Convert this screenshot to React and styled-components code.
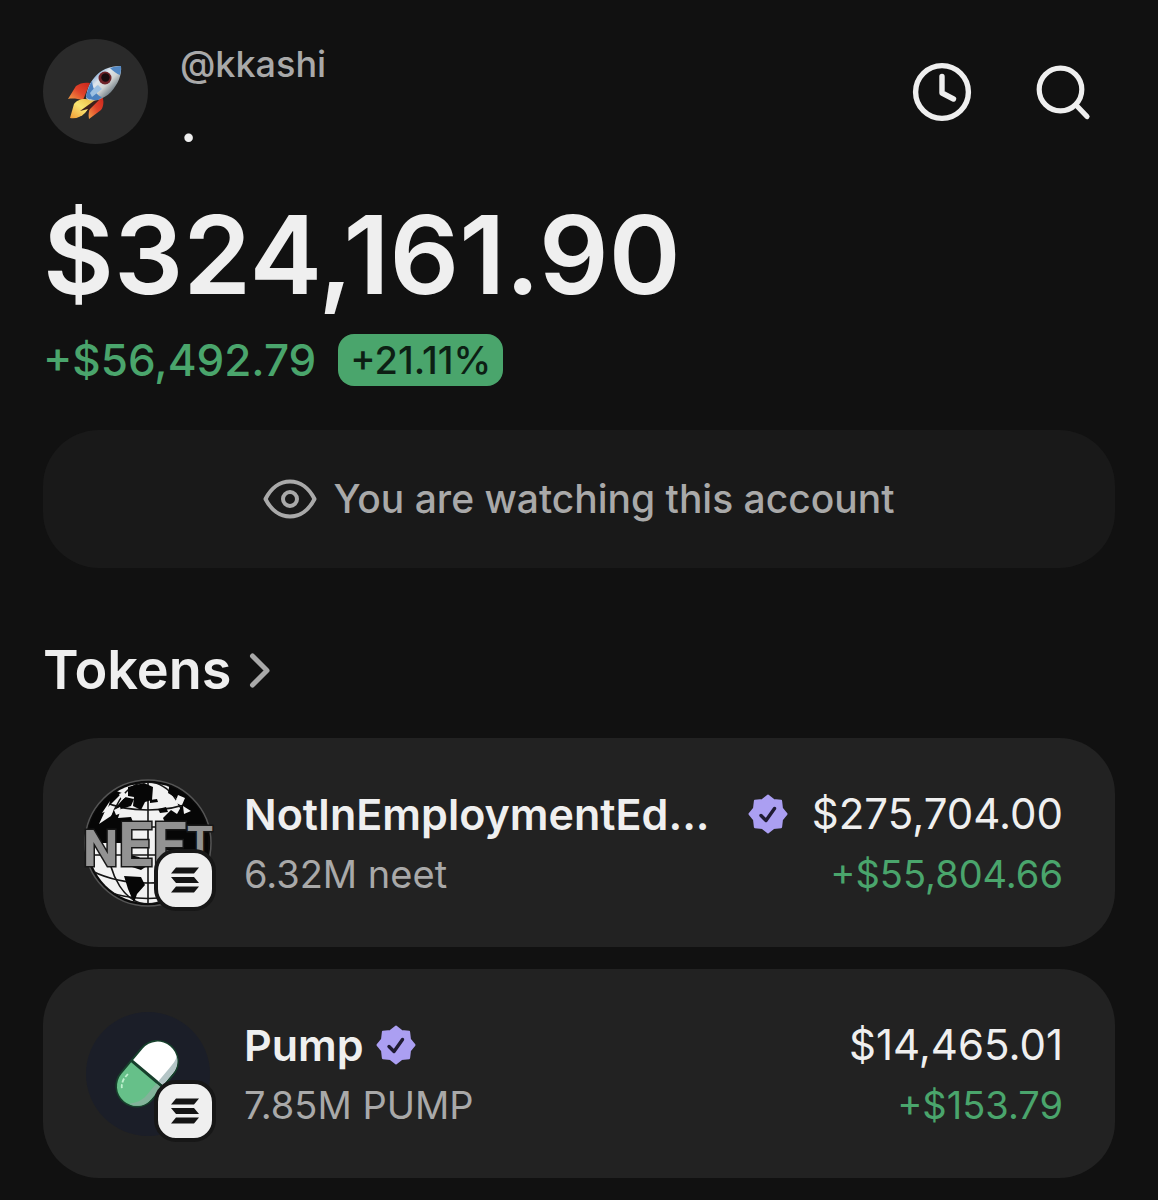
import styled, { createGlobalStyle } from "styled-components";

const Colors = {
  page: "#111111",
  card: "#222222",
  banner: "#191919",
  avatar: "#2a2a2a",
  white: "#efefef",
  grey: "#a9a9a9",
  green: "#4aa56c",
  purple: "#ab9ff2",
};

const tokens = [
  {
    id: "neet",
    name: "NotInEmploymentEd...",
    balance: "6.32M neet",
    value: "$275,704.00",
    change: "+$55,804.66",
    long: true,
    Logo: NeetLogo,
  },
  {
    id: "pump",
    name: "Pump",
    balance: "7.85M PUMP",
    value: "$14,465.01",
    change: "+$153.79",
    long: false,
    Logo: PumpLogo,
  },
];

const App = () => {
  return (
    <>
      <GlobalStyle />
      <Page>
        <Header>
          <Avatar>
            <Rocket />
          </Avatar>
          <Account>
            <Handle>@kkashi</Handle>
            <AccountName>.</AccountName>
          </Account>
          <Actions>
            <IconButton type="button" aria-label="Activity">
              <svg width="60" height="60" viewBox="0 0 60 60" fill="none">
                <g
                  stroke={Colors.white}
                  strokeWidth="5.4"
                  strokeLinecap="round"
                  strokeLinejoin="round"
                >
                  <circle cx="30" cy="30" r="26.4" />
                  <path d="M30 14.500v16.500l11.500 6" />
                </g>
              </svg>
            </IconButton>
            <IconButton type="button" aria-label="Search">
              <svg width="60" height="60" viewBox="0 0 60 60" fill="none">
                <g
                  stroke={Colors.white}
                  strokeWidth="5.2"
                  strokeLinecap="round"
                >
                  <circle cx="26.5" cy="27.5" r="21.3" />
                  <path d="M42 43l11 11.5" />
                </g>
              </svg>
            </IconButton>
          </Actions>
        </Header>

        <Balance>$324,161.90</Balance>
        <ChangeRow>
          <Change>+$56,492.79</Change>
          <Percent>+21.11%</Percent>
        </ChangeRow>

        <Banner>
          <svg width="54" height="42" viewBox="0 0 54 42" fill="none">
            <g stroke={Colors.grey} strokeWidth="4" strokeLinejoin="round">
              <path d="M2.500 21C8 10 17 3.500 27 3.500S46 10 51.500 21C46 32 37 38.500 27 38.500S8 32 2.500 21Z" />
              <circle cx="27" cy="21" r="7" />
            </g>
          </svg>
          <span>You are watching this account</span>
        </Banner>

        <SectionTitle>
          <SectionLink href="#tokens">
            Tokens
            <svg width="22" height="36" viewBox="0 0 22 36" fill="none">
              <path
                d="M3.500 4l14.500 14.500L3.500 33"
                stroke={Colors.grey}
                strokeWidth="5"
                strokeLinecap="round"
                strokeLinejoin="round"
              />
            </svg>
          </SectionLink>
        </SectionTitle>

        <TokenList id="tokens">
          {tokens.map(({ id, name, balance, value, change, long, Logo }) => (
            <TokenCard key={id}>
              <LogoWrapper>
                <Logo />
                <Network>
                  <Solana />
                </Network>
              </LogoWrapper>
              <TokenInfo>
                <NameRow>
                  <TokenName $long={long}>{name}</TokenName>
                  <Verified />
                </NameRow>
                <TokenBalance>{balance}</TokenBalance>
              </TokenInfo>
              <TokenValue>
                <Value>{value}</Value>
                <ValueChange>{change}</ValueChange>
              </TokenValue>
            </TokenCard>
          ))}
        </TokenList>
      </Page>
    </>
  );
};

export default App;

function Rocket() {
  return (
    <svg width="56" height="56" viewBox="0 0 56 56">
      <defs>
        <linearGradient id="body" x1="0.2" y1="0.2" x2="0.75" y2="0.75">
          <stop offset="0" stopColor="#6d9bd0" />
          <stop offset="0.35" stopColor="#dfe6ec" />
          <stop offset="0.65" stopColor="#d0d3d2" />
          <stop offset="1" stopColor="#6f7c84" />
        </linearGradient>
        <linearGradient id="fin" x1="1" y1="0" x2="0" y2="1">
          <stop offset="0" stopColor="#c9261c" />
          <stop offset="0.5" stopColor="#e0432a" />
          <stop offset="1" stopColor="#f3a046" />
        </linearGradient>
        <linearGradient id="flame" x1="1" y1="0" x2="0" y2="1">
          <stop offset="0" stopColor="#e9b23a" />
          <stop offset="0.5" stopColor="#f8e572" />
          <stop offset="1" stopColor="#f09a34" />
        </linearGradient>
      </defs>
      <path d="M22 19c-5-1-10 0-14 3L0 35c5-1 10 0 15 1Z" fill="url(#fin)" />
      <path d="M34 32c2 4 2 10-1 14l-12 9c-1-4 0-8 1-12Z" fill="url(#fin)" />
      <path d="M17 35c-5 0-9 2-11 5L2 54c6 1 11-1 15-5l12-13Z" fill="url(#flame)" />
      <path d="M30 34L12 47l8-2-3 5 14-14Z" fill="#3c211c" />
      <path
        d="M53 2c1 9-3 18-10 26-4 4-8 6-13 8-5 1-10 1-12-2 1-8 3-14 8-20C32 6 41 2 53 2Z"
        fill="url(#body)"
      />
      <path d="M53 2c-4 0-8 1-11 2 3 3 7 6 10 7 1-3 1-6 1-9Z" fill="#5288c4" />
      <path d="M24 17c-3 5-5 10-6 16 2 3 7 3 12 3l4-3c-5-1-9-7-10-16Z" fill="#4a80bf" />
      <path d="M22 29c3-4 6-7 8-8l4 4-10 8Z" fill="#9dc0e2" />
      <circle cx="37" cy="14" r="6.500" fill="#6e2228" />
      <circle cx="37.500" cy="13.500" r="4.200" fill="#180c10" />
    </svg>
  );
}

function NeetLogo() {
  return (
    <NeetSvg width="128" height="128" viewBox="0 0 128 128">
      <defs>
        <clipPath id="globe">
          <circle cx="64" cy="64" r="61" />
        </clipPath>
      </defs>
      <circle cx="64" cy="64" r="63" fill="#0b0b0b" stroke="#555" strokeWidth="1.5" />
      <g clipPath="url(#globe)">
        <circle cx="64" cy="64" r="60" fill="#f2f2f2" />
        <g fill="none" stroke="#151515" strokeWidth="1.6">
          <path d="M64 0v128M18 22c26 12 66 12 92 0M4 48h120M4 76h120M8 92c32 16 80 16 112 0M22 112c26 10 58 10 84 0" />
          <ellipse cx="64" cy="64" rx="40" ry="61" />
        </g>
        <g fill="#060606">
          <path d="M0 58V20L24 9l14 5-8 8-8 8-7 15 12-8 6-10 8-9 9 2-3 7-10 3-3 9 13-1 2 5-8 6 4 6-8 9H0Z" />
          <path d="M44 8l16-4 9 4-1 13-7 2-4 8-8-4 1-9-6-1Z" />
          <path d="M86 3l15 7 27 21v26l-18 1-14-8-13-2-4-9 8-8 6 4 5-9-6-7-8-5Z" />
          <path d="M76 46h20l28 5v29H94l-5-8-13-1Z" />
          <path d="M38 74l17 4 8 9-6 4-15-5ZM40 97l17 1 4 8-8 9-3 9-6-14Z" />
          <path d="M66 21l7-1 1 3-8 1ZM74 30l8-2 2 5-8 1Z" />
        </g>
        <g fill="#f2f2f2">
          <path d="M35 15l5-2 3 4-5 4ZM94 16l7 3-3 7-7-2ZM18 34l8-12-3 10ZM99 27l8 5-7 3ZM30 31l6-3 2 6-6 2Z" />
        </g>
      </g>
      {/* wordmark that runs across the globe */}
      <text
        x="-1"
        y="87"
        fontFamily="Roboto, 'Liberation Sans', sans-serif"
        fontWeight="700"
        fill="#929292"
        stroke="#171717"
        strokeWidth="3"
        paintOrder="stroke"
      >
        <tspan fontSize="50">N</tspan>
        <tspan fontSize="61">EE</tspan>
        <tspan fontSize="42" dy="-10">T</tspan>
      </text>
    </NeetSvg>
  );
}

function PumpLogo() {
  return (
    <svg width="128" height="128" viewBox="0 0 128 128">
      <circle cx="64" cy="64" r="62" fill="#1b1e28" />
      <g transform="translate(1 2) rotate(40 62 61)">
        <rect x="41" y="24" width="43" height="75" rx="21.500" fill="#17402c" />
        <path d="M43 60V45a19.500 19.500 0 0 1 39 0v15Z" fill="#ffffff" />
        <path d="M74 29c6 4 8 10 8 16v15h-6V43c0-6 0-10-2-14Z" fill="#b4c5c6" />
        <path d="M43 63v15a19.500 19.500 0 0 0 39 0V63Z" fill="#66c089" />
        <path d="M76 63v16c0 6-3 12-8 17 9-2 14-9 14-18V63Z" fill="#83b39a" />
        <path d="M48 74v6c1 5 3 8 6 10" fill="none" stroke="#bff0cf" strokeWidth="1.8" strokeDasharray="4 2" />
      </g>
    </svg>
  );
}

function Solana() {
  return (
    <svg width="30" height="28" viewBox="0 0 30 28" fill="#141414">
      <path d="M6 1.500h23l-5 6H1ZM1 11h23l5 6H6ZM6 20.500h23l-5 6H1Z" />
    </svg>
  );
}

function Verified() {
  return (
    <VerifiedIcon
      role="img"
      aria-label="Verified"
      width="40"
      height="40"
      viewBox="0 0 40 40"
    >
      <path
        d="M20 1.500l5.400 4.400 7.700.900.900 7.700L38.500 20l-4.500 5.500-.900 7.700-7.700.900L20 38.500l-5.400-4.400-7.700-.900-.900-7.700L1.500 20 6 14.500l.900-7.700 7.700-.900Z"
        fill={Colors.purple}
        stroke={Colors.purple}
        strokeWidth="2"
        strokeLinejoin="round"
      />
      <path
        d="M13 21.500l5 5 8.500-12"
        fill="none"
        stroke="#1f1b33"
        strokeWidth="3.4"
        strokeLinecap="round"
        strokeLinejoin="round"
      />
    </VerifiedIcon>
  );
}

const GlobalStyle = createGlobalStyle`
  * {
    box-sizing: border-box;
  }
  body {
    margin: 0;
    background: ${Colors.page};
    color: ${Colors.white};
    font-family: Inter, "Liberation Sans", sans-serif;
  }
`;

const Page = styled.main`
  padding: 39px 43px 20px;
`;

const Header = styled.header`
  display: flex;
  align-items: flex-start;
  gap: 32px;
`;

const Avatar = styled.div`
  display: flex;
  align-items: center;
  justify-content: center;
  width: 105px;
  height: 105px;
  border-radius: 50%;
  background: ${Colors.avatar};
`;

const Account = styled.div`
  flex: 1;
`;

const Handle = styled.div`
  font-size: 36px;
  line-height: 50px;
  font-weight: 500;
  color: ${Colors.grey};
`;

const AccountName = styled.div`
  font-size: 54px;
  line-height: 68px;
  font-weight: 600;
`;

const Actions = styled.div`
  display: flex;
  gap: 62px;
  padding: 23px 21px 0 0;
`;

const IconButton = styled.button`
  display: flex;
  padding: 0;
  border: none;
  background: none;
  cursor: pointer;
`;

const Balance = styled.div`
  margin-top: 37px;
  font-size: 109px;
  line-height: 120px;
  font-weight: 600;
`;

const ChangeRow = styled.div`
  display: flex;
  align-items: center;
  gap: 22px;
  margin-top: 20px;
`;

const Change = styled.span`
  font-size: 44px;
  line-height: 52px;
  font-weight: 500;
  color: ${Colors.green};
`;

const Percent = styled.span`
  padding: 0 12px;
  border-radius: 16px;
  font-size: 38px;
  line-height: 52px;
  font-weight: 500;
  color: #0d1f14;
  background: ${Colors.green};
`;

const Banner = styled.div`
  display: flex;
  align-items: center;
  justify-content: center;
  gap: 16px;
  margin-top: 44px;
  padding: 44px;
  border-radius: 56px;
  font-size: 39px;
  line-height: 50px;
  font-weight: 500;
  color: ${Colors.grey};
  background: ${Colors.banner};
`;

const SectionTitle = styled.h2`
  margin: 66px 0 32px;
  font-size: 54px;
  line-height: 72px;
  font-weight: 600;
`;

const SectionLink = styled.a`
  display: inline-flex;
  align-items: center;
  gap: 18px;
  color: inherit;
  text-decoration: none;
`;

const TokenList = styled.ul`
  display: flex;
  flex-direction: column;
  gap: 22px;
  margin: 0;
  padding: 0;
  list-style: none;
`;

const TokenCard = styled.li`
  display: flex;
  align-items: center;
  padding: 41px 52px 40px 41px;
  border-radius: 56px;
  background: ${Colors.card};
`;

const LogoWrapper = styled.div`
  position: relative;
  display: flex;
  margin-right: 32px;
`;

const NeetSvg = styled.svg`
  overflow: visible;
`;

const Network = styled.div`
  position: absolute;
  right: -4px;
  bottom: -4px;
  display: flex;
  align-items: center;
  justify-content: center;
  width: 62px;
  height: 62px;
  border: 4px solid #171717;
  border-radius: 22px;
  background: ${Colors.white};
`;

const TokenInfo = styled.div`
  flex: 1;
  min-width: 0;
  margin-right: 24px;
  padding-top: 2px;
`;

const NameRow = styled.div`
  display: flex;
  align-items: center;
  gap: 12px;
`;

const TokenName = styled.div`
  flex: ${(props) => (props.$long ? "1 1 auto" : "0 1 auto")};
  font-size: 43px;
  line-height: 60px;
  font-weight: 600;
  white-space: nowrap;
`;

const VerifiedIcon = styled.svg`
  flex: none;
`;

const TokenBalance = styled.div`
  font-size: 38px;
  line-height: 60px;
  color: ${Colors.grey};
`;

const TokenValue = styled.div`
  padding-top: 2px;
  text-align: right;
  white-space: nowrap;
`;

const Value = styled.div`
  font-size: 42px;
  line-height: 60px;
`;

const ValueChange = styled.div`
  font-size: 38px;
  line-height: 60px;
  color: ${Colors.green};
`;
